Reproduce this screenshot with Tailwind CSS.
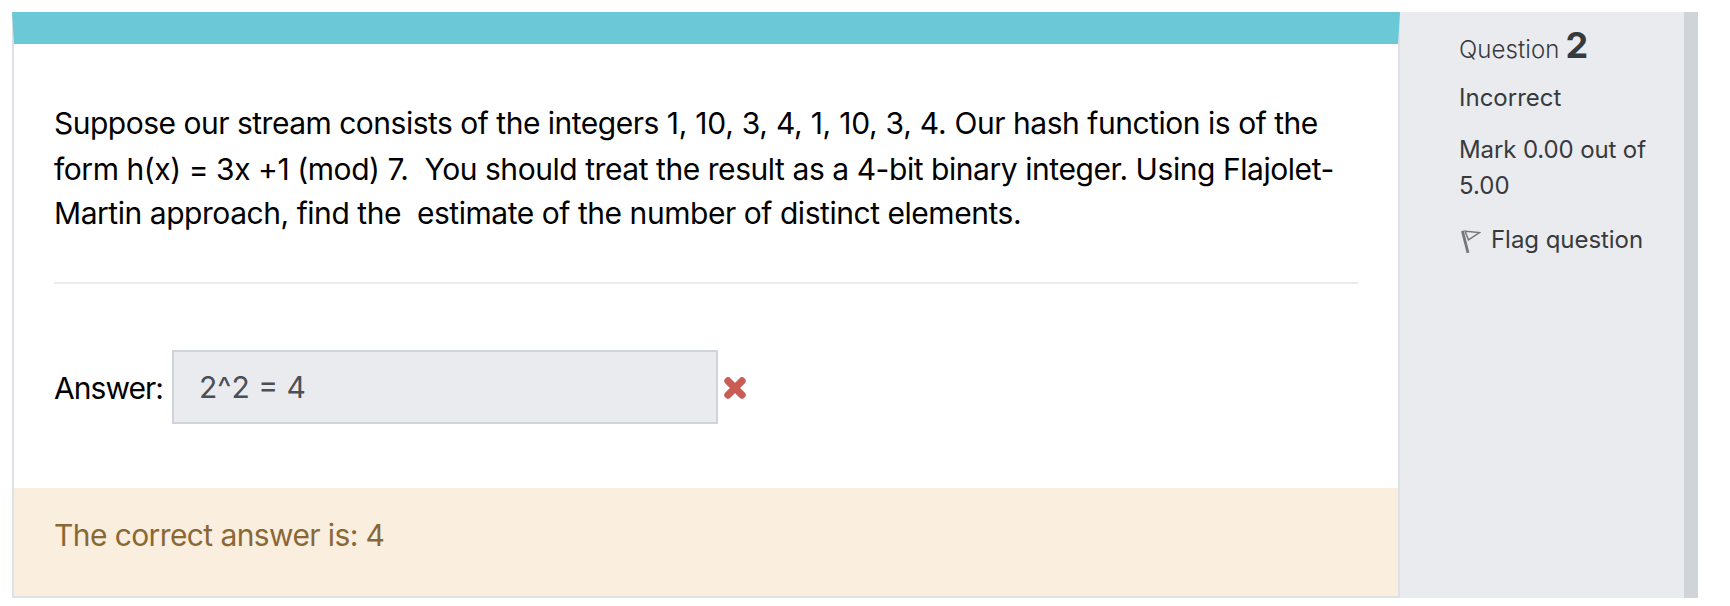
<!DOCTYPE html>
<html lang="en">
<head>
<meta charset="utf-8">
<title>Question 2</title>
<script src="https://cdn.jsdelivr.net/npm/@tailwindcss/browser@4"></script>
</head>
<body class="bg-white font-['Inter',sans-serif] h-[606px] overflow-hidden">
<div class="flex h-full pt-3 pb-2 pl-3">
  <main class="flex w-[1388px] flex-col border-x-2 border-t-[32px] border-b-2 border-x-[#dee2e6] border-t-[#6ac8d7] border-b-[#dee2e6] bg-white text-[30px] text-black">
    <div class="flex h-[444px] flex-col px-10 pt-[57px]">
      <p class="flex flex-col whitespace-pre"><span class="h-[46px] leading-[45px] tracking-[-0.25px]"><span class="tracking-[-0.5px]">Suppose our stream consists of the integers </span>1, 10, 3, 4, 1, 10, 3, 4. <span class="tracking-[-0.47px]">Our hash function is of the</span></span><span class="h-11 leading-[45px] tracking-[-0.444px]">form h(x) = 3x +1 (mod) 7.  You should treat the result as a 4-bit binary integer. Using Flajolet-</span><span class="h-[45px] leading-[45px] tracking-[-0.456px]">Martin approach, find the  estimate of the number of distinct elements.</span></p>
      <hr class="mt-[46px] border-t-2 border-[#eaebef]">
      <div class="mt-[66px] flex h-[74px] items-center">
        <label class="w-[118px] pt-0.5 leading-[45px] tracking-[-0.95px]">Answer:</label>
        <div class="flex h-full w-[546px] items-center border-2 border-[#ced4da] bg-[#eaebef] px-[25px] text-[#495057]">2^2 = 4</div>
        <svg class="mt-0.5 ml-1.5 size-[22px]" viewBox="0 0 22 22" fill="none" stroke="#ca5c56" stroke-width="7.4" stroke-linecap="round"><path d="M4 4 18 18M18 4 4 18" /></svg>
      </div>
    </div>
    <div class="h-[108px] bg-[#faeedf] px-10 pt-[25px] leading-[45px] text-[#8a6835] tracking-[-0.6px]">The correct answer is: 4</div>
  </main>
  <aside class="w-[298px] border-r-[14px] border-[#ced4d8] bg-[#eaebef] pl-[59px] text-[24px] leading-9 text-[#373a3c]">
    <h3 class="flex h-[68px] items-baseline pt-[9px] font-light"><span class="tracking-[0.1px]">Question</span><span class="ml-[6px] text-[36px] font-bold leading-[48px]">2</span></h3>
    <div class="h-[52px]">Incorrect</div>
    <div class="h-9 tracking-[-0.12px]">Mark 0.00 out of</div>
    <div class="h-[54px]">5.00</div>
    <div class="flex tracking-[-0.05px]">
      <svg class="mt-2 mr-2.5 h-6 w-[22px]" viewBox="0 0 22 24" fill="none"><path d="M3.4 .8 9 22.8" stroke="#777" stroke-width="2.8"/><path d="M6 1.2 20.5 2.6 9.5 9.8Z" stroke="#777" stroke-width="1.5"/></svg>
      <span>Flag question</span>
    </div>
  </aside>
</div>
</body>
</html>
